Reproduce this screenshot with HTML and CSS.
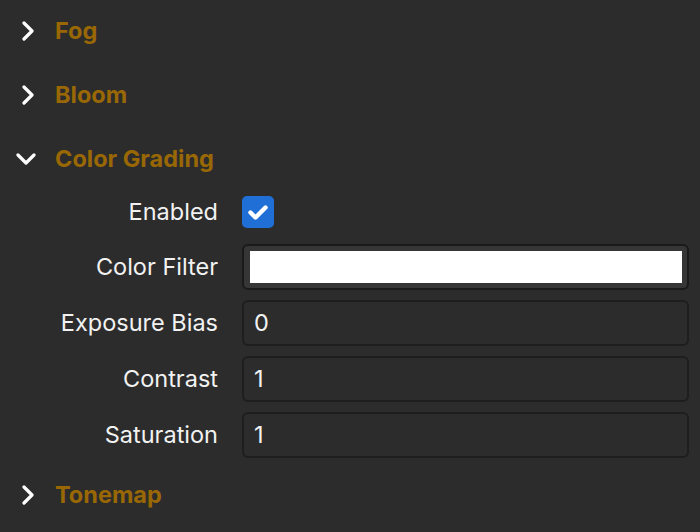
FILE: index.html
```html
<!DOCTYPE html>
<html lang="en">
<head>
    <meta charset="UTF-8">
    <meta name="viewport" content="width=device-width, initial-scale=1.0">
    <title>Post Processing</title>
    <link rel="stylesheet" href="styles.css">
</head>
<body>
    <div class="panel">
        <div class="section">
            <div class="section-header">
                <svg class="chevron" viewBox="0 0 12 20"><path d="M2 2 L10 10 L2 18"/></svg>
                <span class="section-title">Fog</span>
            </div>
        </div>

        <div class="section">
            <div class="section-header">
                <svg class="chevron" viewBox="0 0 12 20"><path d="M2 2 L10 10 L2 18"/></svg>
                <span class="section-title">Bloom</span>
            </div>
        </div>

        <div class="section open">
            <div class="section-header">
                <svg class="chevron down" viewBox="0 0 20 12"><path d="M2 2 L10 10 L18 2"/></svg>
                <span class="section-title">Color Grading</span>
            </div>
            <div class="fields">
                <div class="field first">
                    <label>Enabled</label>
                    <div class="checkbox">
                        <svg viewBox="0 0 32 32"><path d="M8.5 16.5 L13.5 21.5 L23.5 11.5"/></svg>
                    </div>
                </div>
                <div class="field">
                    <label>Color Filter</label>
                    <div class="color-input"><div class="swatch"></div></div>
                </div>
                <div class="field">
                    <label>Exposure Bias</label>
                    <div class="number-input">0</div>
                </div>
                <div class="field">
                    <label>Contrast</label>
                    <div class="number-input">1</div>
                </div>
                <div class="field">
                    <label>Saturation</label>
                    <div class="number-input">1</div>
                </div>
            </div>
        </div>

        <div class="section">
            <div class="section-header">
                <svg class="chevron" viewBox="0 0 12 20"><path d="M2 2 L10 10 L2 18"/></svg>
                <span class="section-title">Tonemap</span>
            </div>
        </div>
    </div>
</body>
</html>
```

FILE: styles.css
```css
body {
    margin: 0;
    background-color: #2c2c2c;
    font-family: Inter, 'Noto Sans', sans-serif;
    color: #f2f2f2;
}
.panel {
    display: flex;
    flex-direction: column;
    gap: 2px;
}
.section-header {
    height: 62px;
    display: flex;
    align-items: center;
}
.chevron {
    width: 12px;
    height: 20px;
    margin-left: 22px;
    margin-right: 21px;
    fill: none;
    stroke: #ffffff;
    stroke-width: 3.2;
    stroke-linecap: round;
    stroke-linejoin: round;
}
.chevron.down {
    width: 20px;
    height: 12px;
    margin-left: 16px;
    margin-right: 19px;
}
.section-title {
    font-size: 23.5px;
    font-weight: 700;
    color: #996805;
    padding-bottom: 2px;
}
.open .fields {
    display: flex;
    flex-direction: column;
    gap: 10px;
    padding-right: 11px;
    margin-bottom: 4px;
}
.field {
    display: grid;
    grid-template-columns: 218px 1fr;
    column-gap: 24px;
    align-items: center;
    height: 46px;
}
.field.first {
    height: 44px;
}
.field label {
    text-align: right;
    font-size: 23.5px;
    padding-bottom: 2px;
}
.checkbox {
    width: 32px;
    height: 32px;
    border-radius: 5px;
    background-color: #1f6fd6;
}
.checkbox svg {
    width: 32px;
    height: 32px;
    fill: none;
    stroke: #ffffff;
    stroke-width: 4.4;
    stroke-linecap: round;
    stroke-linejoin: round;
}
.color-input {
    box-sizing: border-box;
    height: 46px;
    padding: 5px 5px 5px 6px;
    border: 2px solid #1a1a1a;
    border-radius: 6px;
    background-color: #363636;
}
.swatch {
    height: 100%;
    background-color: #ffffff;
}
.number-input {
    box-sizing: border-box;
    height: 46px;
    display: flex;
    align-items: center;
    padding-left: 10px;
    padding-bottom: 1px;
    border: 2px solid #1e1e1e;
    border-radius: 6px;
    font-size: 23.5px;
}
```
